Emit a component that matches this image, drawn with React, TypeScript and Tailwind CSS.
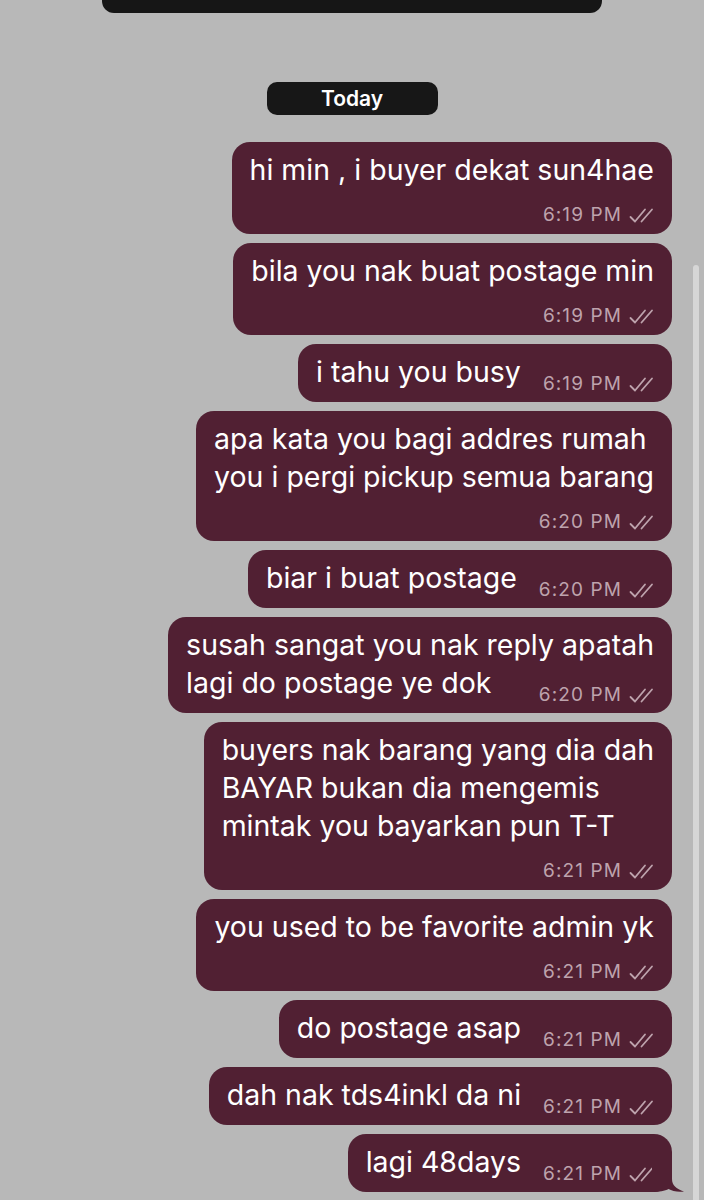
import React from 'react'

type Msg = {
  lines: string[]
  time: string
  inline?: boolean
  tail?: boolean
}

const messages: Msg[] = [
  { lines: ['hi min , i buyer dekat sun4hae'], time: '6:19 PM' },
  { lines: ['bila you nak buat postage min'], time: '6:19 PM' },
  { lines: ['i tahu you busy'], time: '6:19 PM', inline: true },
  { lines: ['apa kata you bagi addres rumah', 'you i pergi pickup semua barang'], time: '6:20 PM' },
  { lines: ['biar i buat postage'], time: '6:20 PM', inline: true },
  { lines: ['susah sangat you nak reply apatah', 'lagi do postage ye dok'], time: '6:20 PM', inline: true },
  { lines: ['buyers nak barang yang dia dah', 'BAYAR bukan dia mengemis', 'mintak you bayarkan pun T-T'], time: '6:21 PM' },
  { lines: ['you used to be favorite admin yk'], time: '6:21 PM' },
  { lines: ['do postage asap'], time: '6:21 PM', inline: true },
  { lines: ['dah nak tds4inkl da ni'], time: '6:21 PM', inline: true },
  { lines: ['lagi 48days'], time: '6:21 PM', inline: true, tail: true },
]

const DoubleCheck = () => (
  <svg width="25" height="15" viewBox="0 0 25 15" fill="none" stroke="currentColor" strokeWidth="1.8" strokeLinecap="round" strokeLinejoin="round">
    <polyline points="1.5,9 6,13.5 16,1.5" />
    <polyline points="12.5,13.5 23,1.5" />
  </svg>
)

const Time = ({ time }: { time: string }) => (
  <span className="flex items-center gap-[7px] text-[19px] leading-[22px] tracking-[1.1px] text-[#bea3ad] whitespace-nowrap">
    {time}
    <DoubleCheck />
  </span>
)

const Bubble = ({ msg }: { msg: Msg }) => {
  const last = msg.lines.length - 1
  return (
    <div className={`relative bg-[#512033] text-white rounded-[18px] px-[18px] pt-[9px] ${msg.inline ? 'pb-[11px]' : 'pb-[8px]'}`}>
      {msg.lines.map((line, i) =>
        msg.inline && i === last ? (
          <div key={i} className="flex items-end">
            <span className="text-[28.5px] leading-[38px] whitespace-nowrap">{line}</span>
            <span className="ml-auto pl-[22px] mb-[-4px]">
              <Time time={msg.time} />
            </span>
          </div>
        ) : (
          <div key={i} className="text-[28.5px] leading-[38px] whitespace-nowrap">{line}</div>
        )
      )}
      {!msg.inline && (
        <div className="flex justify-end mt-[15px]">
          <Time time={msg.time} />
        </div>
      )}
      {msg.tail && (
        <svg className="absolute right-[-13px] bottom-0" width="33" height="26" viewBox="0 0 33 26">
          <path d="M0 0 H20 V13 C20 19 24 23 32 25.5 C26 26.5 20 25 16.5 23 C13 25 7 26 0 26 Z" fill="#512033" />
        </svg>
      )}
    </div>
  )
}

export default function App() {
  return (
    <div className="relative w-[704px] h-[1200px] overflow-hidden bg-[#b8b8b8] font-['Inter','Liberation_Sans',sans-serif]">
      <div className="mx-auto w-[500px] h-[13px] bg-[#161616] rounded-b-[12px]" />

      <div className="flex justify-center mt-[69px]">
        <div className="w-[171px] h-[33px] rounded-[10px] bg-[#171717] flex items-center justify-center text-white text-[21px] font-semibold">
          Today
        </div>
      </div>

      <div className="flex flex-col items-end gap-[9px] mt-[27px] pr-[32px]">
        {messages.map((m, i) => (
          <Bubble key={i} msg={m} />
        ))}
      </div>

      {/* scroll indicator */}
      <div className="absolute left-[693px] top-[265px] w-[6px] h-[960px] rounded-full bg-[#d6d6d6]" />
    </div>
  )
}
